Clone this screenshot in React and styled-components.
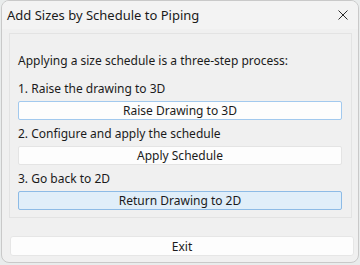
import React from 'react';
import styled, { createGlobalStyle } from 'styled-components';

const Global = createGlobalStyle`
  html, body {
    margin: 0;
    padding: 0;
    background: #e9ecec;
  }
  body {
    font-family: "Noto Sans", "Open Sans", sans-serif;
    font-size: 12px;
    color: #1b1b1b;
  }
`;

const Window = styled.div`
  box-sizing: border-box;
  width: 358px;
  height: 263px;
  margin-left: 1px;
  background: #f0f0f0;
  border: 1px solid #c9c9c9;
  border-radius: 8px;
  display: flex;
  flex-direction: column;
  overflow: hidden;
`;

const TitleBar = styled.div`
  height: 28px;
  display: flex;
  align-items: center;
  justify-content: space-between;
  padding: 0 10px 0 5px;
  background: #f3f3f3;
`;

const Title = styled.span`
  font-size: 13px;
  color: #1a1a1a;
`;

const Close = styled.button`
  border: 0;
  background: none;
  padding: 0;
  width: 10px;
  height: 10px;
  display: flex;
  align-items: center;
  justify-content: center;
`;

const Body = styled.div`
  flex: 1;
  display: flex;
  flex-direction: column;
  padding: 4px 6px 0 7px;
`;

const Group = styled.div`
  box-sizing: border-box;
  height: 185px;
  border: 1px solid #e3e3e3;
  padding: 19px 9px 5px 8px;
  display: flex;
  flex-direction: column;
`;

const Intro = styled.p`
  margin: 0 0 12px;
  line-height: 16px;
`;

const Step = styled.p`
  margin: 0;
  line-height: 16px;
`;

const Action = styled.button`
  box-sizing: border-box;
  height: 20px;
  margin: 4px 0 6px;
  padding: 0;
  font: inherit;
  color: #1b1b1b;
  border-radius: 2px;
  border: 1px solid ${p => (p.$tone === 'active' ? '#8dbbe6' : p.$tone === 'focus' ? '#a2c9ee' : '#e4e4e4')};
  background: ${p => (p.$tone === 'active' ? '#e0eef9' : '#fdfdfd')};
`;

const Footer = styled.div`
  margin-top: 18px;
`;

const ExitButton = styled(Action)`
  width: 344px;
  height: 20px;
  margin: 0 0 0 1px;
  border-color: #e6e6e6;
  border-radius: 3px;
  background: #fdfdfd;
`;

function CloseIcon() {
  return (
    <svg width="10" height="10" viewBox="0 0 10 10">
      <path d="M0.5 0.5 L9.5 9.5 M9.5 0.5 L0.5 9.5" stroke="#2b2b2b" strokeWidth="1" />
    </svg>
  );
}

export default function App() {
  return (
    <>
      <Global />
      <Window>
        <TitleBar>
          <Title>Add Sizes by Schedule to Piping</Title>
          <Close aria-label="Close">
            <CloseIcon />
          </Close>
        </TitleBar>
        <Body>
          <Group>
            <Intro>Applying a size schedule is a three-step process:</Intro>
            <Step>1. Raise the drawing to 3D</Step>
            <Action $tone="focus">Raise Drawing to 3D</Action>
            <Step>2. Configure and apply the schedule</Step>
            <Action>Apply Schedule</Action>
            <Step>3. Go back to 2D</Step>
            <Action $tone="active">Return Drawing to 2D</Action>
          </Group>
          <Footer>
            <ExitButton>Exit</ExitButton>
          </Footer>
        </Body>
      </Window>
    </>
  );
}
